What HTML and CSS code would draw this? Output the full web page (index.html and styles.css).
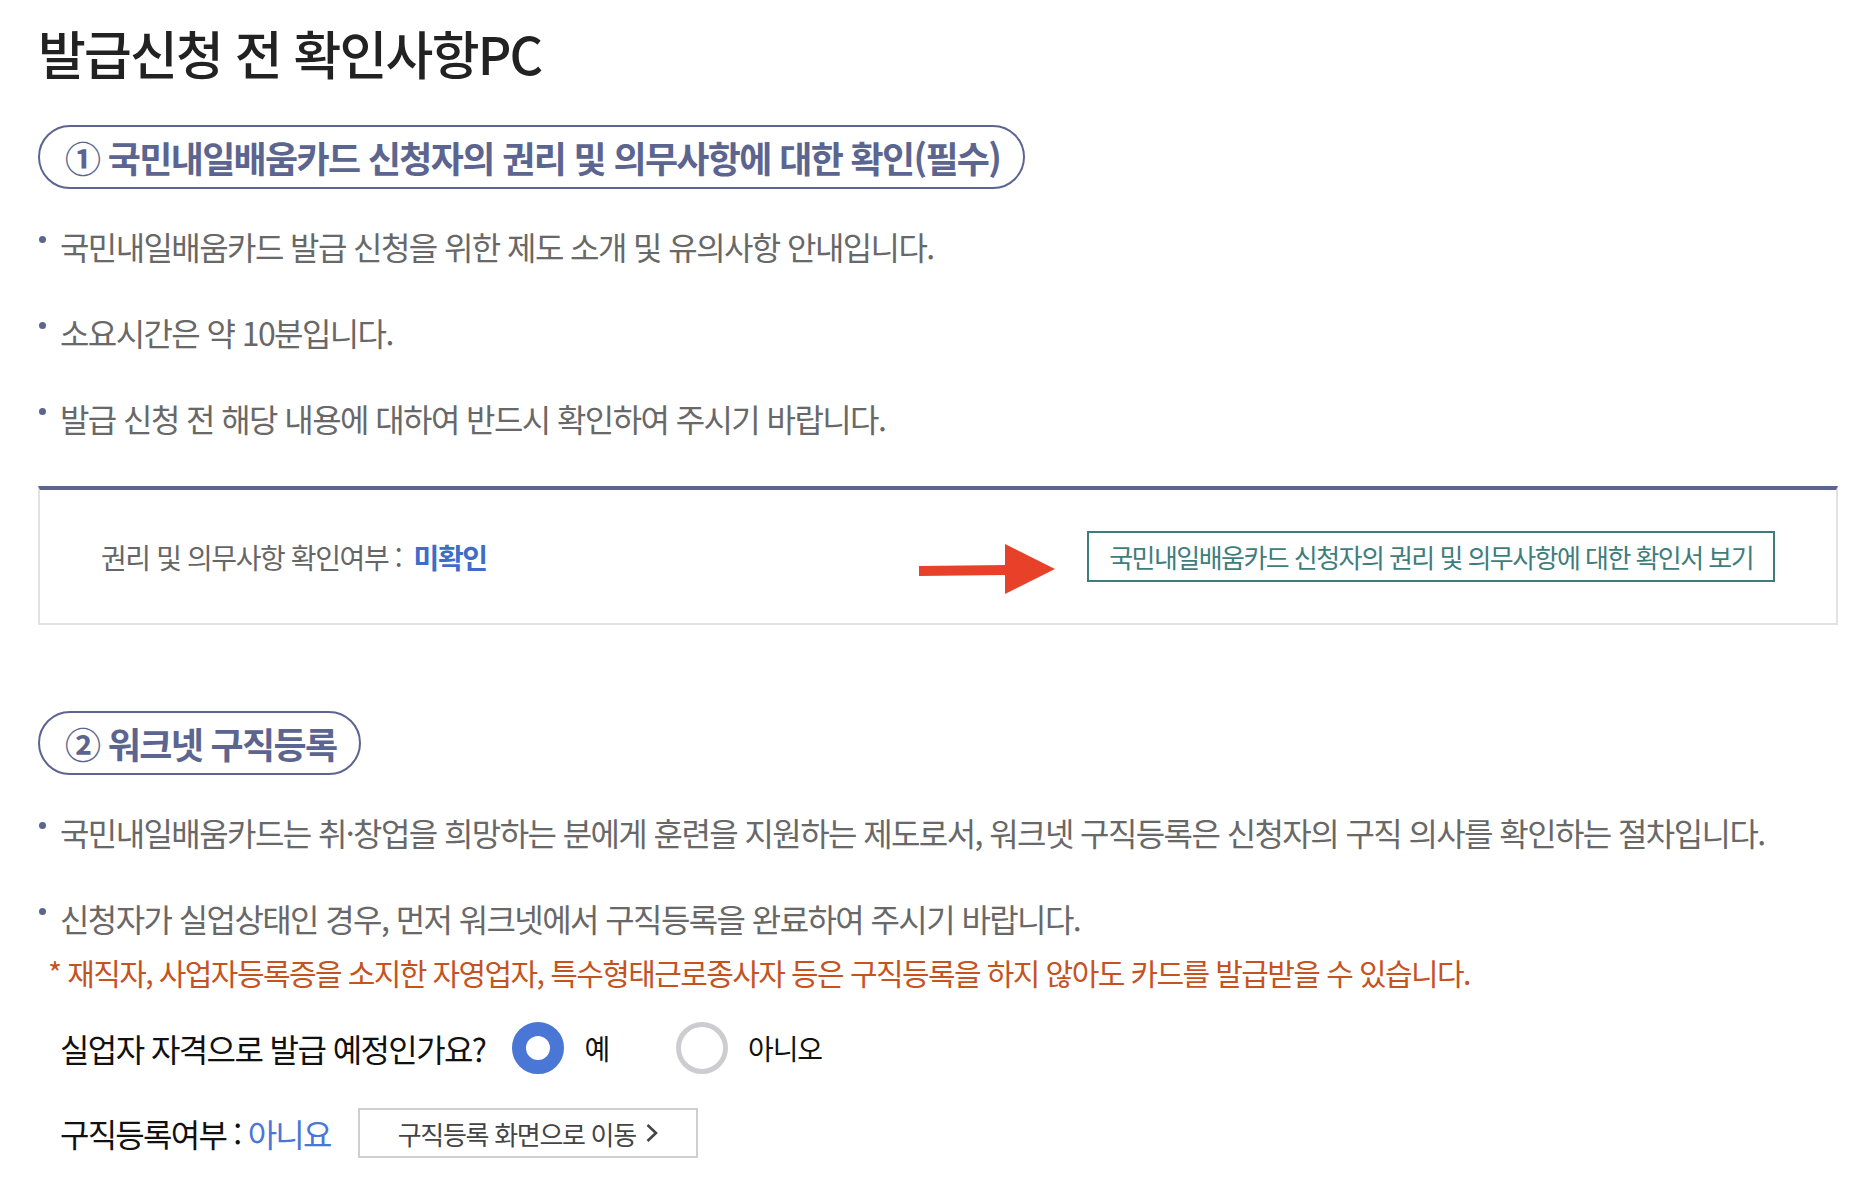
FILE: index.html
```html
<!DOCTYPE html>
<html lang="ko">
<head>
  <meta charset="UTF-8">
  <title>발급신청 전 확인사항</title>
  <link rel="stylesheet" href="styles.css">
</head>
<body>
  <div class="page">
    <h1 class="page-title">발급신청 전 확인사항PC</h1>

    <section class="step">
      <h2 class="step-title">① 국민내일배움카드 신청자의 권리 및 의무사항에 대한 확인(필수)</h2>

      <ul class="notice-list">
        <li>국민내일배움카드 발급 신청을 위한 제도 소개 및 유의사항 안내입니다.</li>
        <li>소요시간은 약 10분입니다.</li>
        <li>발급 신청 전 해당 내용에 대하여 반드시 확인하여 주시기 바랍니다.</li>
      </ul>

      <div class="confirm-box">
        <p class="confirm-status">권리 및 의무사항 확인여부 : <strong>미확인</strong></p>
        <div class="confirm-action">
          <svg class="arrow" width="136" height="50" viewBox="0 0 136 50">
            <polygon points="0,22 88,21 88,31 0,32" fill="#e8412a"/>
            <polygon points="86,0 136,25 86,50" fill="#e8412a"/>
          </svg>
          <button class="btn btn-teal">국민내일배움카드 신청자의 권리 및 의무사항에 대한 확인서 보기</button>
        </div>
      </div>
    </section>

    <section class="step step-worknet">
      <h2 class="step-title">② 워크넷 구직등록</h2>

      <ul class="notice-list">
        <li>국민내일배움카드는 취·창업을 희망하는 분에게 훈련을 지원하는 제도로서, 워크넷 구직등록은 신청자의 구직 의사를 확인하는 절차입니다.</li>
        <li>신청자가 실업상태인 경우, 먼저 워크넷에서 구직등록을 완료하여 주시기 바랍니다.</li>
      </ul>
      <p class="note">* 재직자, 사업자등록증을 소지한 자영업자, 특수형태근로종사자 등은 구직등록을 하지 않아도 카드를 발급받을 수 있습니다.</p>

      <div class="question-row">
        <span class="question">실업자 자격으로 발급 예정인가요?</span>
        <label class="radio-label"><input type="radio" name="unemployed" class="radio" checked> 예</label>
        <label class="radio-label"><input type="radio" name="unemployed" class="radio"> 아니오</label>
      </div>

      <div class="status-row">
        <span class="status">구직등록여부 : <em>아니요</em></span>
        <button class="btn btn-gray">구직등록 화면으로 이동
          <svg class="chevron" width="14" height="20" viewBox="0 0 14 20">
            <polyline points="2.5,2 11,10 2.5,18" fill="none" stroke="#444" stroke-width="2.6"/>
          </svg>
        </button>
      </div>
    </section>
  </div>
</body>
</html>
```

FILE: styles.css
```css
body {
  margin: 0;
  background-color: #fff;
  font-family: "Noto Sans CJK KR", "Noto Sans", sans-serif;
  color: #222;
}

.page {
  padding: 27px 34px 0 38px;
}

.page-title {
  margin: 0;
  font-size: 52px;
  line-height: 52px;
  font-weight: 500;
  letter-spacing: -0.035em;
  color: #222;
}

.step {
  margin-top: 46px;
}

.step-worknet {
  margin-top: 86px;
}

.step-title {
  display: inline-flex;
  align-items: center;
  box-sizing: border-box;
  height: 64px;
  margin: 0;
  padding: 0 23px 0 25px;
  border: 2px solid #5b6590;
  border-radius: 32px;
  font-size: 36px;
  font-weight: 700;
  letter-spacing: -0.046em;
  color: #5b6590;
}

.notice-list {
  list-style: none;
  margin: 37px 0 0;
  padding: 0;
}

.notice-list li {
  display: flex;
  font-size: 32px;
  line-height: 40px;
  letter-spacing: -0.05em;
  color: #686868;
}

.notice-list li + li {
  margin-top: 46px;
}

.notice-list li::before {
  content: "";
  flex-shrink: 0;
  width: 7px;
  height: 7px;
  margin: 10px 14px 0 1px;
  border-radius: 50%;
  background-color: #5b6590;
}

.confirm-box {
  display: flex;
  align-items: center;
  justify-content: space-between;
  margin-top: 48px;
  padding: 41px 61px;
  border: 2px solid #e2e2e2;
  border-top: 4px solid #5b6590;
}

.confirm-status {
  margin: 0;
  font-size: 28px;
  letter-spacing: -0.05em;
  color: #666;
}

.confirm-status strong {
  margin-left: 6px;
  color: #3f6cc8;
}

.confirm-action {
  display: flex;
  align-items: center;
  gap: 32px;
}

.arrow {
  margin: 12px 0 -12px;
}

.btn {
  display: inline-flex;
  align-items: center;
  justify-content: center;
  box-sizing: border-box;
  background: #fff;
  font-family: inherit;
  cursor: pointer;
}

.btn-teal {
  height: 51px;
  padding: 0 20px;
  border: 2px solid #3e7d7c;
  font-size: 26px;
  letter-spacing: -0.06em;
  color: #3e7d7c;
}

.btn-gray {
  gap: 9px;
  height: 50px;
  padding: 0 37px 0 38px;
  border: 2px solid #cfcfd3;
  font-size: 26px;
  letter-spacing: -0.05em;
  color: #444;
}

.note {
  margin: 14px 0 0;
  padding-left: 10px;
  font-size: 30px;
  line-height: 40px;
  letter-spacing: -0.053em;
  color: #c4531f;
}

.question-row {
  display: flex;
  align-items: center;
  margin-top: 30px;
  padding-left: 22px;
}

.question {
  margin-right: 27px;
  font-size: 32px;
  letter-spacing: -0.05em;
  color: #111;
}

.radio-label {
  display: inline-flex;
  align-items: center;
  gap: 20px;
  font-size: 28px;
  letter-spacing: -0.04em;
  color: #111;
}

.radio-label + .radio-label {
  margin-left: 67px;
}

.radio {
  appearance: none;
  box-sizing: border-box;
  width: 52px;
  height: 52px;
  margin: 0;
  border: 5px solid #cdcdd1;
  border-radius: 50%;
  background: #fff;
}

.radio:checked {
  border: 14px solid #4a76d6;
}

.status-row {
  display: flex;
  align-items: center;
  gap: 27px;
  margin-top: 34px;
  padding-left: 22px;
}

.status {
  font-size: 32px;
  letter-spacing: -0.055em;
  color: #111;
}

.status em {
  font-style: normal;
  color: #4a76d6;
}
```
